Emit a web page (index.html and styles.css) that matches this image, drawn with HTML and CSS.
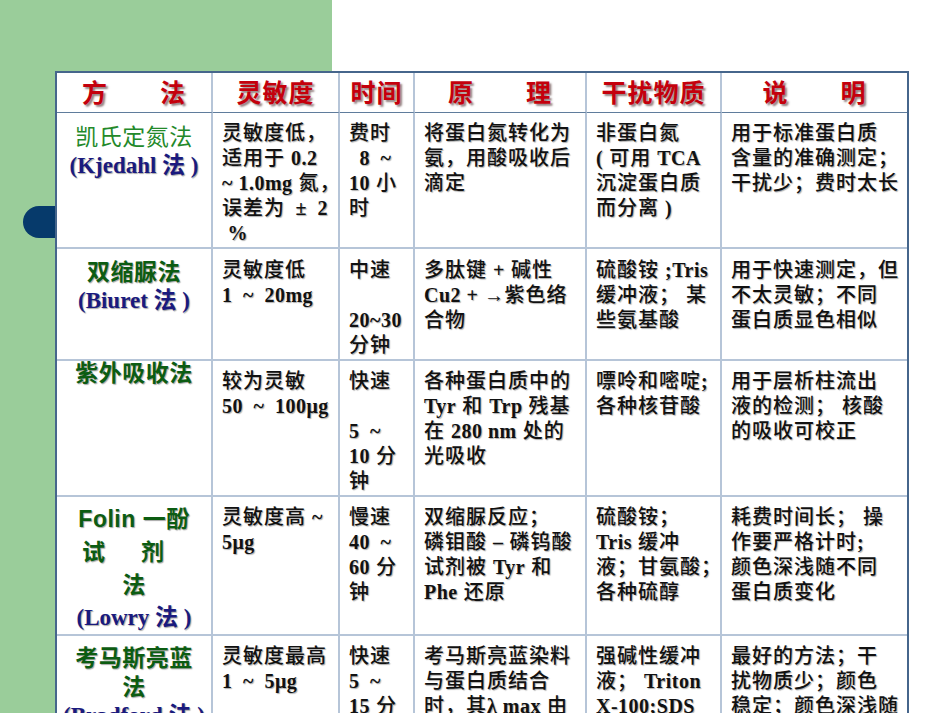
FILE: index.html
```html
<!DOCTYPE html>
<html lang="zh-CN">
<head>
<meta charset="utf-8">
<title>蛋白质含量测定方法比较</title>
<link rel="stylesheet" href="styles.css">
</head>
<body>
<div class="pill"></div>
<main class="page">
<table class="grid">
  <colgroup>
    <col class="c1"><col class="c2"><col class="c3"><col class="c4"><col class="c5"><col class="c6">
  </colgroup>
  <thead>
    <tr class="hrow">
      <th><span class="split"><span>方</span><span>法</span></span></th>
      <th>灵敏度</th>
      <th>时间</th>
      <th><span class="split"><span>原</span><span>理</span></span></th>
      <th>干扰物质</th>
      <th><span class="split"><span>说</span><span>明</span></span></th>
    </tr>
  </thead>
  <tbody>
    <tr class="r1">
      <td class="m m1"><span class="lite">凯氏定氮法</span><br><span class="en">(Kjedahl 法 )</span></td>
      <td>灵敏度低，<br>适用于 <b>0.2</b><br><b>~ 1.0mg</b> 氮，<br>误差为<b class="w"> ± 2</b><br><b>&nbsp;%</b></td>
      <td>费时<br><b class="w">&nbsp;8 ~</b><br><b>10</b> 小<br>时</td>
      <td>将蛋白氮转化为<br>氨，用酸吸收后<br>滴定</td>
      <td>非蛋白氮<br><b>(</b> 可用 <b>TCA</b><br>沉淀蛋白质<br>而分离 <b>)</b></td>
      <td>用于标准蛋白质<br>含量的准确测定；<br>干扰少；费时太长</td>
    </tr>
    <tr class="r2">
      <td class="m m2"><span class="dk">双缩脲法</span><br><span class="en">(Biuret 法 )</span></td>
      <td>灵敏度低<br><b class="w">1 ~ 20mg</b></td>
      <td>中速<br><br><b>20~30</b><br>分钟</td>
      <td>多肽键 <b>+</b> 碱性<br><b>Cu2 + →</b>紫色络<br>合物</td>
      <td>硫酸铵 <b>;Tris</b><br>缓冲液； 某<br>些氨基酸</td>
      <td>用于快速测定，但<br>不太灵敏；不同<br>蛋白质显色相似</td>
    </tr>
    <tr class="r3">
      <td class="m m3"><span class="dk">紫外吸收法</span></td>
      <td>较为灵敏<br><b class="w">50 ~ 100μg</b></td>
      <td>快速<br><br><b class="w">5 ~</b><br><b>10</b> 分<br>钟</td>
      <td>各种蛋白质中的<br><b>Tyr</b> 和 <b>Trp</b> 残基<br>在 <b>280 nm</b> 处的<br>光吸收</td>
      <td>嘌呤和嘧啶<b>;</b><br>各种核苷酸</td>
      <td>用于层析柱流出<br>液的检测； 核酸<br>的吸收可校正</td>
    </tr>
    <tr class="r4">
      <td class="m m4"><span class="dk">Folin 一酚</span><br><span class="dk left">试&emsp;&ensp;剂</span><br><span class="dk">法</span><br><span class="en">(Lowry 法 )</span></td>
      <td>灵敏度高 <b>~</b><br><b>5μg</b></td>
      <td>慢速<br><b class="w">40 ~</b><br><b>60</b> 分<br>钟</td>
      <td>双缩脲反应；<br>磷钼酸 <b>–</b> 磷钨酸<br>试剂被 <b>Tyr</b> 和<br><b>Phe</b> 还原</td>
      <td>硫酸铵；<br><b>Tris</b> 缓冲<br>液；甘氨酸；<br>各种硫醇</td>
      <td>耗费时间长； 操<br>作要严格计时<b>;</b><br>颜色深浅随不同<br>蛋白质变化</td>
    </tr>
    <tr class="r5">
      <td class="m m5"><span class="dk">考马斯亮蓝</span><br><span class="dk">法</span><br><span class="en">(Bradford 法 )</span></td>
      <td>灵敏度最高<br><b class="w">1 ~ 5μg</b></td>
      <td>快速<br><b class="w">5 ~</b><br><b>15</b> 分</td>
      <td>考马斯亮蓝染料<br>与蛋白质结合<br>时，其<b>λ max</b> 由</td>
      <td>强碱性缓冲<br>液； <b>Triton</b><br><b>X-100;SDS</b></td>
      <td>最好的方法；干<br>扰物质少；颜色<br>稳定；颜色深浅随</td>
    </tr>
  </tbody>
</table>
</main>
</body>
</html>
```

FILE: styles.css
```css
html, body {
  margin: 0;
  padding: 0;
}
body {
  width: 950px;
  height: 713px;
  overflow: hidden;
  position: relative;
  background: linear-gradient(90deg, #9acd9a 0, #9acd9a 332px, #ffffff 332px);
  font-family: "Liberation Serif", "Noto Sans CJK SC", serif;
}
.pill {
  position: absolute;
  left: 23px;
  top: 206px;
  width: 70px;
  height: 32px;
  border-radius: 16px;
  background: #063a6b;
}
.page {
  padding: 71px 0 0 55px;
  position: relative;
  z-index: 1;
}
.grid {
  width: 854px;
  table-layout: fixed;
  border-collapse: separate;
  border-spacing: 0;
  border: 2px solid #46668c;
  border-bottom: none;
  background: #ffffff;
}
.c1 { width: 156px; }
.c2 { width: 127px; }
.c3 { width: 75px; }
.c4 { width: 172px; }
.c5 { width: 135px; }
.c6 { width: 185px; }

th, td {
  border-right: 2px solid #b6c5d8;
  border-bottom: 2px solid #b6c5d8;
  vertical-align: top;
  white-space: nowrap;
  overflow: hidden;
}
th:last-child, td:last-child {
  border-right: none;
}
.hrow { height: 40px; }
th {
  border-bottom: 1px solid #5f7c9c;
  vertical-align: middle;
  text-align: center;
  padding: 0 0 4px;
  font-family: "Noto Sans CJK SC", sans-serif;
  font-weight: 700;
  font-size: 25px;
  line-height: 30px;
  letter-spacing: 1px;
  color: #c4000c;
  text-shadow: 2px 2px 2px rgba(40, 0, 0, 0.5);
}
.split {
  display: flex;
  justify-content: space-between;
  width: 104px;
  margin: 0 auto;
}
.r1 { height: 136px; }
.r2 { height: 112px; }
.r3 { height: 136px; }
.r4 { height: 136px; }
.r5 { height: 140px; }

td {
  padding: 8px 2px 0 9px;
  font-size: 20px;
  line-height: 25px;
  letter-spacing: 1px;
  font-weight: 500;
  color: #111111;
  text-shadow: 1px 1px 1px rgba(0, 0, 0, 0.32);
}
.r1 td { padding-top: 8px; }
.r2 td { padding-top: 9px; }
td b {
  font-weight: 700;
  letter-spacing: 0.5px;
}
td b.w {
  word-spacing: 5px;
}
td.m {
  text-align: center;
  padding-left: 0;
  padding-right: 0;
  font-size: 23px;
  line-height: 28px;
  letter-spacing: 0.5px;
}
td.m1 { padding-top: 8px; }
td.m2 { padding-top: 9px; }
td.m3 { padding-top: 0; line-height: 24px; }
td.m4 { padding-top: 6px; line-height: 32px; }
td.m5 { padding-top: 8px; }
.lite {
  font-family: "Noto Sans CJK SC", sans-serif;
  font-weight: 400;
  color: #23892a;
  text-shadow: none;
}
.dk {
  font-family: "Liberation Sans", "Noto Sans CJK SC", sans-serif;
  font-weight: 700;
  color: #0c5c12;
  text-shadow: 1px 1px 1px rgba(0, 0, 0, 0.35);
}
.left {
  display: inline-block;
  width: 104px;
  text-align: left;
}
.en {
  font-family: "Liberation Serif", "Noto Sans CJK SC", serif;
  font-weight: 700;
  font-size: 23px;
  letter-spacing: 0;
  color: #1a1a7e;
  text-shadow: 1px 1px 1px rgba(0, 0, 0, 0.35);
}
```
